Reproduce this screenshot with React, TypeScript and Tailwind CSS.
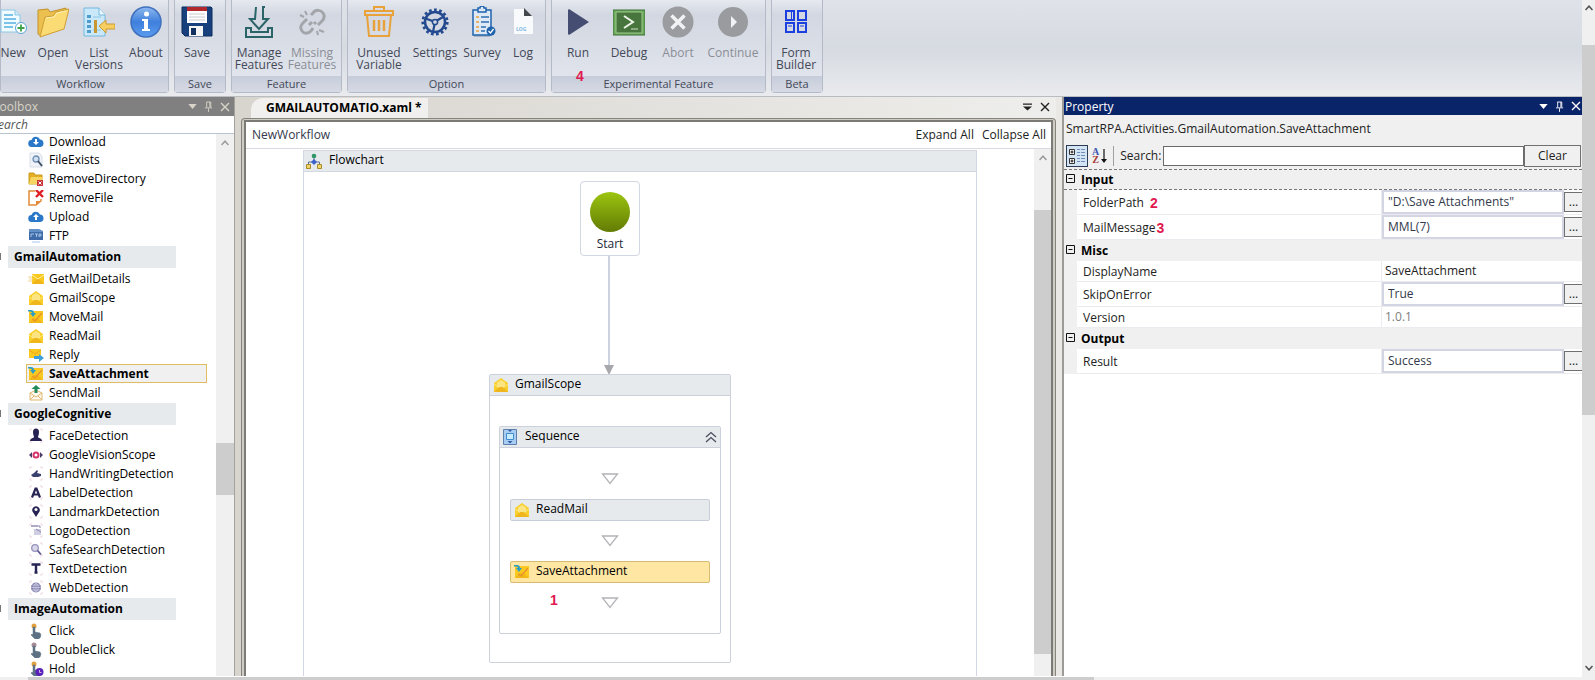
import { ReactNode, useState } from 'react'

// ---------- small shared glyphs ----------

function CaretDown({ className = '' }: { className?: string }) {
  return (
    <svg viewBox="0 0 10 6" className={`h-[5px] w-[9px] ${className}`} aria-hidden="true">
      <path d="M0 0h10L5 6z" fill="currentColor" />
    </svg>
  )
}

function Pin() {
  return (
    <svg viewBox="0 0 10 12" className="h-[11px] w-[9px]" fill="none" stroke="currentColor" aria-hidden="true">
      <path d="M2.500 1h5M3 1v6M6.500 1v6M7.500 1v6M1 7.500h8M5 8v4" />
    </svg>
  )
}

function Cross() {
  return (
    <svg viewBox="0 0 10 10" className="h-[10px] w-[10px]" fill="none" stroke="currentColor" strokeWidth="1.4" aria-hidden="true">
      <path d="M1 1l8 8M9 1L1 9" />
    </svg>
  )
}

function ChevronUp({ className = '' }: { className?: string }) {
  return (
    <svg viewBox="0 0 8 6" className={`h-[6px] w-[8px] ${className}`} fill="none" stroke="currentColor" strokeWidth="1.5" aria-hidden="true">
      <path d="M.5 5L4 1.200l3.500 3.800" />
    </svg>
  )
}

// ---------- ribbon icons ----------

const ribbonIcons: Record<string, ReactNode> = {
  New: (
    <>
      <path d="M4 4h14l5 5v17H4z" fill="#f2fbff" stroke="#8cc8e6" />
      <path d="M18 4v5h5" fill="#cdeaf8" stroke="#8cc8e6" />
      <path d="M7 9h9M7 13h12M7 17h12M7 21h9" stroke="#7cc3ea" strokeWidth="2" />
      <circle cx="24" cy="22" r="5.500" fill="#fff" stroke="#5aa5d8" />
      <path d="M24 18.500v7M20.500 22h7" stroke="#3fa24a" strokeWidth="1.800" />
    </>
  ),
  Open: (
    <>
      <path d="M1 4l10-1 2 3 16-4-1 6-24 22-3-2z" fill="#ecc04e" stroke="#c2922c" />
      <path d="M8 11l8-1 3-4 13-3-5 20L3 31z" fill="#fbdc74" stroke="#cf9d36" />
      <path d="M9 12l8-1 3-4 9-2" stroke="#fff2b5" fill="none" />
    </>
  ),
  'List Versions': (
    <>
      <path d="M1 2h15l6 7v21H1z" fill="#c9e9fa" stroke="#74b8de" />
      <path d="M16 2v7h6" fill="#eaf7ff" stroke="#74b8de" />
      <path d="M4 9h4v3H4zM4 14h4v3H4zM4 19h4v3H4zM4 24h4v3H4z" fill="#4e9ccb" />
      <path d="M10 11h8M10 24h8" stroke="#8cc4e4" />
      <path d="M11 14h3v13h-3z" fill="#c9972f" />
      <path d="M16 20l7-6v4h9v5h-9v4z" fill="#f7cf60" stroke="#cc9a34" />
    </>
  ),
  About: (
    <>
      <defs>
        <linearGradient id="aboutFill" x1="0" y1="0" x2="0" y2="1">
          <stop offset="0" stopColor="#8db9ef" />
          <stop offset=".5" stopColor="#3f7fdd" />
          <stop offset="1" stopColor="#5c9df0" />
        </linearGradient>
      </defs>
      <circle cx="16" cy="16" r="15" fill="url(#aboutFill)" stroke="#3f70bd" strokeWidth="1.500" />
      <circle cx="16.500" cy="8" r="2.500" fill="#fff" />
      <path d="M12 13h6v10h2v2h-8v-2h2v-8h-2z" fill="#fff" />
    </>
  ),
  Save: (
    <>
      <path d="M1 1h29l1 1v28H4l-3-3z" fill="#17407c" stroke="#0d2c5c" />
      <path d="M6 1h20v4H6z" fill="#b3282d" />
      <path d="M6 5h20v12H6z" fill="#fff" />
      <path d="M8 8h16M8 11h16M8 14h16" stroke="#c9c9d2" />
      <path d="M8 20h14v10H8z" fill="#f4f4f4" />
      <path d="M10 22h5v7h-5z" fill="#12305f" />
    </>
  ),
  'Manage Features': (
    <g fill="none" stroke="#2b6468" strokeWidth="2">
      <path d="M13 1l-1 12H7l9 10 9-10h-5V1" />
      <path d="M19 1h3" />
      <path d="M3 22v9h26v-9h-4v4H8v-4z" />
    </g>
  ),
  'Missing Features': (
    <g fill="none" stroke="#a3a5aa" strokeWidth="3">
      <path d="M15 9l2-2c3-4 8-3 10 0s1 6-1 8l-4 4M17 22l-2 3c-3 3-7 3-9 0s-2-5 1-8l4-4M13 19l3-3M20 16l-2 2" />
      <path d="M9 5l2 4M4 9l4 2M28 26l-5-2M22 29l-1-4" strokeWidth="2" />
    </g>
  ),
  'Unused Variable': (
    <g fill="none" stroke="#e9a23b" strokeWidth="2">
      <path d="M2 5h28v4H2zM11 4V1h10v3" />
      <path d="M4 9l2 21h20l2-21" />
      <path d="M11 14v11M16 14v11M21 14v11" strokeWidth="2.500" />
    </g>
  ),
  Settings: (
    <g fill="none" stroke="#23498f">
      <circle cx="16" cy="16" r="12.300" strokeWidth="2.600" strokeDasharray="2.700 2.450" />
      <circle cx="16" cy="16" r="10" strokeWidth="2.500" />
      <circle cx="16" cy="16" r="2.600" strokeWidth="1.500" />
      <path d="M18 14.500l6-3.500M13.500 15l-7-2.500M15.500 18.500L14 26" strokeWidth="2.200" />
    </g>
  ),
  Survey: (
    <g fill="none">
      <path d="M8 30h16" stroke="#7f8da0" strokeWidth="2" opacity=".5" />
      <path d="M7 4h18v25H7z" fill="#dfe9f5" stroke="#1f63ad" strokeWidth="1.500" />
      <path d="M12 2h2a2 2 0 014 0h2v4h-8z" fill="#dfe9f5" stroke="#1f63ad" strokeWidth="1.500" />
      <path d="M15 11h8M15 16h8M15 21h5M15 25h4" stroke="#2f6fb4" strokeWidth="1.500" />
      <path d="M10 11h3M10 16h3M10 21h3M10 25h3" stroke="#e9a23b" strokeWidth="1.500" />
      <circle cx="25" cy="25" r="4.500" fill="#1f63ad" />
      <path d="M22.500 25l2 2 3-4" stroke="#fff" strokeWidth="1.300" />
    </g>
  ),
  Log: (
    <>
      <path d="M7 3h11l8 8v17H7z" fill="#f9fafb" />
      <path d="M17 2l8 8h-8z" fill="#44474d" />
      <text x="9" y="25" fontSize="5" fontWeight="bold" fill="#7fb9e6">LOG</text>
    </>
  ),
  Run: <path d="M6 4l1-1 20 13L7 29l-1-1z" fill="#454d72" />,
  Debug: (
    <>
      <path d="M0 4h32v25H0z" fill="#6aa85a" stroke="#3f7138" />
      <path d="M3 6h26v21H3z" fill="#47753d" stroke="#9cca8c" />
      <path d="M11 10l9 6-9 6" fill="none" stroke="#eef6ea" strokeWidth="2" />
      <path d="M18 23h7" stroke="#cfe3c7" />
    </>
  ),
  Abort: (
    <>
      <circle cx="16" cy="16" r="15.500" fill="#9a9c9f" />
      <path d="M9.500 9.500l13 13M22.500 9.500l-13 13" stroke="#f1f2f4" strokeWidth="3.500" />
    </>
  ),
  Continue: (
    <>
      <circle cx="16" cy="16" r="15" fill="#999b9f" />
      <path d="M14 10l6 6-6 6z" fill="#f1f2f4" />
    </>
  ),
  'Form Builder': (
    <g fill="none" stroke="#1c3fe0" strokeWidth="2">
      <path d="M6 5h8v9H6zM18 5h8v9h-8zM6 17h8v9H6zM18 17h8v9h-8z" />
      <path d="M11.500 6v7M8 20h4M20 20h4" strokeWidth="1" />
    </g>
  ),
}

type RibbonItem = { name: string; width: string; disabled?: boolean }

const ribbonGroups: { label: string; className: string; items: RibbonItem[] }[] = [
  {
    label: 'Workflow',
    className: 'w-[169px]',
    items: [
      { name: 'New', width: '-ml-[7px] w-[38px]' },
      { name: 'Open', width: 'w-[42px]' },
      { name: 'List Versions', width: 'w-[50px]' },
      { name: 'About', width: 'w-[44px]' },
    ],
  },
  { label: 'Save', className: 'w-[52px]', items: [{ name: 'Save', width: 'w-[44px]' }] },
  {
    label: 'Feature',
    className: 'w-[111px]',
    items: [
      { name: 'Manage Features', width: 'w-[54px]' },
      { name: 'Missing Features', width: 'w-[52px]', disabled: true },
    ],
  },
  {
    label: 'Option',
    className: 'w-[199px]',
    items: [
      { name: 'Unused Variable', width: 'w-[62px]' },
      { name: 'Settings', width: 'w-[50px]' },
      { name: 'Survey', width: 'w-[44px]' },
      { name: 'Log', width: 'w-[38px]' },
    ],
  },
  {
    label: 'Experimental Feature',
    className: 'w-[215px]',
    items: [
      { name: 'Run', width: 'w-[52px]' },
      { name: 'Debug', width: 'w-[50px]' },
      { name: 'Abort', width: 'w-[48px]', disabled: true },
      { name: 'Continue', width: 'w-[62px]', disabled: true },
    ],
  },
  { label: 'Beta', className: 'w-[52px]', items: [{ name: 'Form Builder', width: 'w-[48px]' }] },
]

function Marker({ children, className = '' }: { children: ReactNode; className?: string }) {
  return (
    <span className={`font-['Liberation_Sans',sans-serif] text-[14px] leading-4 font-bold text-[#e0194f] ${className}`}>
      {children}
    </span>
  )
}

function Ribbon() {
  return (
    <header className="flex h-[97px] shrink-0 gap-[5px] overflow-hidden border-b border-[#b9bcc0] bg-linear-to-b from-[#dfe2e9] via-[#d6dae1] to-[#e9ebee]">
      {ribbonGroups.map(group => (
        <section
          key={group.label}
          className={`relative flex h-[93px] shrink-0 flex-col rounded-b-sm border-r border-b border-l border-[#b4bac7] bg-linear-to-b from-[#e6e9ef] from-0% via-[#d2d7e1] via-16% to-[#e4e7ee] ${group.className}`}
        >
          <div className="flex flex-1">
            {group.items.map(item => (
              <button
                key={item.name}
                disabled={item.disabled}
                className={`flex shrink-0 flex-col items-center pt-[6px] ${item.width} ${
                  item.disabled ? 'text-[#8b8e96]' : 'text-[#434857]'
                }`}
              >
                <svg viewBox="0 0 32 32" className="h-8 w-8 shrink-0" aria-hidden="true">
                  {ribbonIcons[item.name]}
                </svg>
                <span className="mt-[9px] text-center leading-3">{item.name}</span>
              </button>
            ))}
          </div>
          <div
            className={`flex h-4 items-center justify-center bg-linear-to-b from-[#c6ccda] to-[#d6dae4] text-[11px] whitespace-nowrap text-[#434857] ${
              group.label === 'Workflow' ? 'pr-2' : ''
            }`}
          >
            {group.label}
          </div>
          {group.label === 'Experimental Feature' && <Marker className="absolute top-[68px] left-[24px]">4</Marker>}
        </section>
      ))}
    </header>
  )
}

// ---------- toolbox icons (16 x 16) ----------

const cloud = 'M4 13a3.500 3.500 0 01-.5-7A4.500 4.500 0 0112 5.500a3.800 3.800 0 01.5 7.500z'

const corners = <path d="M2 1h2M2 1v2M14 1h-2M14 1v2M2 14h2M2 14v-2M14 14h-2M14 14v-2" stroke="#ecd6de" fill="none" />

const openMail = (
  <>
    <path d="M1 6l7-5 7 5v9H1z" fill="#f8cf2c" />
    <path d="M4 5.500L8 3l4 2.500V9l-4 2.500L4 9z" fill="#fbe583" />
    <path d="M1 15l5-5h4l5 5z" fill="#efb71c" />
    <path d="M1 7l5 3.500M15 7l-5 3.500" stroke="#fde98a" fill="none" />
  </>
)

const moveMail = (
  <>
    <path d="M1 2h14v12H1z" fill="#f9c922" />
    <path d="M1 14l5-5h4l5 5z" fill="#f3b816" />
    <path d="M4 10l3 2 7-8" stroke="#e88f2c" strokeWidth="1.200" fill="none" />
    <path d="M0 1h3a3 3 0 013 3h2L5 8 2 4h2c0-1-1-1.500-4-1.500z" fill="#2e9fc4" />
  </>
)

const hand = <path d="M5 4h2v5l5 1 1 2-1 3-2 1H7L3 12l1-1 1 1z" fill="#5c7184" stroke="#5c7184" strokeWidth=".5" />

const activityIcons: Record<string, ReactNode> = {
  Download: (
    <>
      <path d={cloud} fill="#2b78c9" />
      <path d="M7 5h2v3h2l-3 3-3-3h2z" fill="#fff" />
    </>
  ),
  FileExists: (
    <>
      <path d="M2 1h9l3 3v11H2z" fill="#f0f3f8" stroke="#d7dde7" />
      <circle cx="8" cy="7" r="3" fill="#cfe0f2" stroke="#6d8db3" strokeWidth="1.300" />
      <path d="M10 9l4 5" stroke="#3d4f66" strokeWidth="2" />
    </>
  ),
  RemoveDirectory: (
    <>
      <path d="M1 2h5l1 2h7v9H1z" fill="#e3ae22" stroke="#c99b22" />
      <path d="M3 6h12l-1 7H1z" fill="#f6d560" />
      <path d="M9 9h6v6H9z" fill="#c9343a" />
      <path d="M10.500 10.500l3 3M13.500 10.500l-3 3" stroke="#fff" />
    </>
  ),
  RemoveFile: (
    <>
      <path d="M7 1H1v14h7l5-4V9" fill="none" stroke="#e38a3a" strokeWidth="1.500" />
      <path d="M8 15v-4h5z" fill="#e38a3a" />
      <path d="M8 0l7 7M15 0L8 7" stroke="#df1f26" strokeWidth="2.400" />
    </>
  ),
  Upload: (
    <>
      <path d={cloud} fill="#2b78c9" />
      <path d="M7 11h2V8h2L8 5 5 8h2z" fill="#fff" />
    </>
  ),
  FTP: (
    <>
      <path d="M1 1h10l4 2v9H1z" fill="#6390c6" />
      <path d="M1 4h14v8H1z" fill="#3f6ca8" />
      <path d="M3 6h3M3 6v3M7 6h3M8.500 6v3M11 9V6h2v2h-2M4 14h8" stroke="#a8c6ea" fill="none" />
    </>
  ),
  GetMailDetails: (
    <>
      <path d="M4 3h12v10H4z" fill="#f9c922" />
      <path d="M4 13l5-5h2l5 5z" fill="#f0b41a" />
      <path d="M4 4l6 4 6-4" stroke="#fff0a0" fill="none" />
      <path d="M0 6h4M1 8h4M0 10h4" stroke="#f0d48a" />
    </>
  ),
  GmailScope: openMail,
  MoveMail: moveMail,
  ReadMail: openMail,
  Reply: (
    <>
      <path d="M1 2h12v9H1z" fill="#f9c922" />
      <path d="M1 3l6 4 6-4" stroke="#e9a91c" fill="none" />
      <path d="M6 9h5V7l5 4-5 4v-3H6z" fill="#3ba0dc" />
    </>
  ),
  SaveAttachment: moveMail,
  SendMail: (
    <>
      <path d="M2 8l6-3 6 3v7H2z" fill="#fdf9ee" stroke="#e0b873" />
      <path d="M2 8l6 4 6-4M2 15l4-4M14 15l-4-4" stroke="#e0b873" fill="none" />
      <path d="M6.500 8V4h-3L8 0l4.500 4h-3v4z" fill="#238a5a" />
    </>
  ),
  FaceDetection: (
    <>
      {corners}
      <path d="M5 4a3 3.500 0 016 0c0 3-1 4-1 5s4 1 4 4H2c0-3 4-3 4-4S5 7 5 4z" fill="#272453" />
    </>
  ),
  GoogleVisionScope: (
    <>
      <path d="M4 5L1 8l3 3zM12 5l3 3-3 3z" fill="#4a3d68" />
      <circle cx="8" cy="8" r="2.500" fill="#fff" stroke="#d6336c" strokeWidth="2" />
    </>
  ),
  HandWritingDetection: (
    <>
      {corners}
      <path d="M3 9l3-2 3-3 1 1-1 2 4 1v2l-3 1H5z" fill="#3b3f6e" />
    </>
  ),
  LabelDetection: (
    <>
      {corners}
      <path d="M4 12.500l3.500-9h1l3.500 9M5.500 9.500h5" stroke="#272453" strokeWidth="2.200" fill="none" />
    </>
  ),
  LandmarkDetection: (
    <>
      {corners}
      <path d="M8 13L4.500 7.500a3.800 3.800 0 117 0z" fill="#272453" />
      <circle cx="8" cy="5.500" r="1.500" fill="#fff" />
    </>
  ),
  LogoDetection: (
    <>
      {corners}
      <path d="M3 2h7v2H3zM6 6h7v6H6z" fill="#cfcde2" />
      <path d="M3 3h9v2M8 6l5 3" stroke="#8d8ab0" fill="none" />
    </>
  ),
  SafeSearchDetection: (
    <>
      {corners}
      <circle cx="7" cy="6" r="3.300" fill="#d8d8ea" stroke="#9694bb" strokeWidth="1.300" />
      <path d="M9.500 8.500L13 12.500" stroke="#5b5891" strokeWidth="1.800" />
    </>
  ),
  TextDetection: (
    <>
      {corners}
      <path d="M3.500 3.500h9M8 3v9M6.500 11.500h3" stroke="#272453" strokeWidth="2.400" fill="none" />
    </>
  ),
  WebDetection: (
    <>
      {corners}
      <circle cx="8" cy="7.500" r="5" fill="#7c7aa9" />
      <path d="M3 7.500h10M8 2.500v10M4 5h8M4 10h8M8 2.500c-3 3-3 7 0 10M8 2.500c3 3 3 7 0 10" stroke="#d9d8ec" strokeWidth=".7" fill="none" />
    </>
  ),
  Click: (
    <>
      <circle cx="6" cy="3" r="2.500" fill="#e0a13e" />
      {hand}
    </>
  ),
  DoubleClick: (
    <>
      <circle cx="6" cy="3" r="2.500" fill="#a58a97" />
      {hand}
    </>
  ),
  Hold: (
    <>
      <circle cx="6" cy="3" r="2.500" fill="#e0a13e" />
      {hand}
      <circle cx="11.500" cy="11" r="4" fill="#5a22b8" />
      <path d="M11.500 9v2.500h2" stroke="#c9b4f0" fill="none" />
    </>
  ),
}

function ActivityIcon({ name }: { name: string }) {
  return (
    <svg viewBox="0 0 16 16" className="h-4 w-4 shrink-0" aria-hidden="true">
      {activityIcons[name]}
    </svg>
  )
}

const toolboxGroups = [
  { title: '', items: ['Download', 'FileExists', 'RemoveDirectory', 'RemoveFile', 'Upload', 'FTP'] },
  {
    title: 'GmailAutomation',
    items: ['GetMailDetails', 'GmailScope', 'MoveMail', 'ReadMail', 'Reply', 'SaveAttachment', 'SendMail'],
  },
  {
    title: 'GoogleCognitive',
    items: [
      'FaceDetection',
      'GoogleVisionScope',
      'HandWritingDetection',
      'LabelDetection',
      'LandmarkDetection',
      'LogoDetection',
      'SafeSearchDetection',
      'TextDetection',
      'WebDetection',
    ],
  },
  { title: 'ImageAutomation', items: ['Click', 'DoubleClick', 'Hold'] },
]

function Toolbox() {
  const [selected, setSelected] = useState('SaveAttachment')

  return (
    <aside className="flex w-[235px] shrink-0 flex-col overflow-hidden border-r border-[#a5a29c] bg-white">
      <div className="flex h-[19px] shrink-0 items-center gap-[7px] bg-[#808080] pr-1 text-[#d8d4c8]">
        <h2 className="-ml-[7px] flex-1">Toolbox</h2>
        <CaretDown />
        <Pin />
        <Cross />
      </div>
      <input
        aria-label="Search activities"
        placeholder="Search"
        className="-ml-2 h-[18px] shrink-0 border-b border-[#b9c4d0] bg-white italic outline-none placeholder:text-[#555]"
      />
      <div className="flex min-h-0 flex-1">
        <div className="min-w-0 flex-1 overflow-hidden">
          {toolboxGroups.map(group => (
            <div key={group.title}>
              {group.title && (
                <div className="mb-px flex h-[23px] items-center">
                  <span className="h-[7px] w-px bg-[#777]" />
                  <h3 className="ml-[7px] flex h-[22px] w-[168px] items-center bg-[#e6eaed] pl-[6px] font-bold text-black">
                    {group.title}
                  </h3>
                </div>
              )}
              <ul>
                {group.items.map(name => (
                  <li key={name}>
                    <button
                      onClick={() => setSelected(name)}
                      className={`ml-[26px] flex w-[181px] items-center gap-[5px] border pl-px text-black ${
                        name === 'Download' ? 'h-4' : 'h-[19px]'
                      } ${selected === name ? 'border-[#e0bd62] bg-[#f0f0f0] font-bold' : 'border-transparent'}`}
                    >
                      <ActivityIcon name={name} />
                      {name}
                    </button>
                  </li>
                ))}
              </ul>
            </div>
          ))}
        </div>
        <div className="flex w-[18px] shrink-0 flex-col items-center bg-[#f0f0f0]">
          <ChevronUp className="mt-[6px] text-[#9a9a9a]" />
          <div className="mt-[297px] h-[52px] w-full bg-[#cdcdcd]" />
        </div>
      </div>
    </aside>
  )
}

// ---------- designer ----------

function DropPoint() {
  return (
    <svg viewBox="0 0 18 12" className="h-3 w-[18px] shrink-0" aria-hidden="true">
      <path d="M1.500 1h15L9 10.500z" fill="#fff" stroke="#b3b3b8" strokeWidth="1.300" />
    </svg>
  )
}

function ActivityCard({ name, active }: { name: string; active?: boolean }) {
  return (
    <div
      className={`flex h-[22px] w-full items-center gap-[6px] rounded-xs border pl-[3px] text-black ${
        active ? 'border-[#d8bb72] bg-[#ffe6a3]' : 'border-[#c9cdd8] bg-[#e6eaed]'
      }`}
    >
      <ActivityIcon name={name} />
      <span className="pb-[2px]">{name}</span>
    </div>
  )
}

function Designer() {
  return (
    <main className="flex min-w-0 flex-1 flex-col bg-linear-to-r from-[#d8d4ce] to-[#eeeeec] pl-[6px]">
      <div className="flex h-[21px] shrink-0 items-end justify-between pr-[6px]">
        <button className="ml-[10px] h-[20px] rounded-tl-xl bg-[#f1f0ee] pr-[6px] pb-px pl-[15px] font-bold text-black">
          GMAILAUTOMATIO.xaml *
        </button>
        <div className="flex h-full items-center gap-2 pb-px text-[#222]">
          <svg viewBox="0 0 10 8" className="h-2 w-[9px]" aria-hidden="true">
            <path d="M0 0h10v1.500H0zM0 3.500h10L5 8z" fill="currentColor" />
          </svg>
          <Cross />
        </div>
      </div>
      <div className="flex min-h-0 flex-1 rounded-t border-x border-t border-[#85857e] bg-[#cfccc5] px-[2px] pt-px">
        <div className="flex min-w-0 flex-1 flex-col border-x-2 border-t-2 border-[#7c7b75] bg-white">
          <div className="flex h-[27px] shrink-0 items-center justify-between border-b border-[#d8dae0] pr-[5px] pl-[6px]">
            <span className="text-[#33394b]">NewWorkflow</span>
            <div className="flex gap-2 text-[#222]">
              <button>Expand All</button>
              <button>Collapse All</button>
            </div>
          </div>
          <div className="flex min-h-0 flex-1">
            <div className="min-w-0 flex-1 overflow-hidden px-[57px] pt-px">
              <div className="relative h-full border-x border-t border-[#d3d7e2] bg-white">
                <div className="flex h-[21px] items-center gap-[7px] border-b border-[#d3d7e2] bg-[#e6eaed] pl-[2px] text-black">
                  <svg viewBox="0 0 16 16" className="h-4 w-4" aria-hidden="true">
                    <path d="M8 4v4M2.500 12V9h11v3" stroke="#5a6f96" fill="none" />
                    <circle cx="8" cy="3" r="2.300" fill="#2f9668" />
                    <path d="M8 6l3 3-3 3-3-3z" fill="#3d63c9" />
                    <path d="M.5 11.500h4v4h-4zM11.500 11.500h4v4h-4z" fill="#f2d665" stroke="#a88b2d" />
                  </svg>
                  <span className="pb-[2px]">Flowchart</span>
                </div>

                <div className="absolute top-[30px] left-[276px] flex h-[75px] w-[60px] flex-col items-center rounded border border-[#d3d7e2] bg-white pt-[10px] text-[#22283a]">
                  <div className="h-10 w-10 rounded-full bg-linear-to-b from-[#9cc510] to-[#637c05]" />
                  <span className="mt-1">Start</span>
                </div>

                <svg className="absolute top-[105px] left-[300px] h-[119px] w-[10px]" viewBox="0 0 10 119" aria-hidden="true">
                  <path d="M5 0v110" stroke="#cdd3de" strokeWidth="2" />
                  <path d="M0 109h10l-5 10z" fill="#a6a8ac" />
                </svg>

                <div className="absolute top-[223px] left-[185px] w-[242px] rounded-xs border border-[#cdd1dc] bg-white pb-[28px]">
                  <div className="flex h-[21px] items-center gap-[6px] border-b border-[#cdd1dc] bg-[#e6eaed] pl-[3px] text-black">
                    <ActivityIcon name="GmailScope" />
                    <span className="pb-[2px]">GmailScope</span>
                  </div>
                  <div className="mx-[9px] mt-[30px] rounded-xs border border-[#cdd1dc] bg-white">
                    <div className="flex h-[21px] items-center gap-[7px] border-b border-[#cdd1dc] bg-[#e6eaed] pr-[3px] pl-[2px] text-black">
                      <svg viewBox="0 0 16 16" className="h-4 w-4" aria-hidden="true">
                        <path d="M1.500.5h13v15h-13z" fill="#a9cdf2" stroke="#5d80ad" />
                        <path d="M4.500 4.500h7v6h-7z" fill="#c8ecfb" stroke="#3f8ccf" />
                        <path d="M6 1h4L8 3zM5.500 12h5L8 14.500z" fill="#2d5ca8" />
                      </svg>
                      <span className="flex-1 pb-[2px]">Sequence</span>
                      <button aria-label="Collapse Sequence">
                        <svg viewBox="0 0 12 12" className="h-3 w-3" fill="none" stroke="#4a4e5e" strokeWidth="1.300" aria-hidden="true">
                          <path d="M1 6l5-4.500L11 6M1 11l5-4.500 5 4.500" />
                        </svg>
                      </button>
                    </div>
                    <div className="relative flex flex-col items-center gap-[14px] px-[10px] pt-[25px] pb-6">
                      <DropPoint />
                      <ActivityCard name="ReadMail" />
                      <DropPoint />
                      <ActivityCard name="SaveAttachment" active />
                      <DropPoint />
                      <Marker className="absolute bottom-[25px] left-[50px]">1</Marker>
                    </div>
                  </div>
                </div>
              </div>
            </div>
            <div className="flex w-[17px] shrink-0 flex-col items-center bg-[#f0f0f0]">
              <ChevronUp className="mt-[6px] text-[#9a9a9a]" />
              <div className="mt-[49px] h-[444px] w-full bg-[#cdcdcd]" />
            </div>
          </div>
        </div>
      </div>
    </main>
  )
}

// ---------- property grid ----------

type Field = { name: string; value: string; kind: 'expression' | 'plain' | 'readonly'; marker?: string }

const propertySections: { title: string; fields: Field[] }[] = [
  {
    title: 'Input',
    fields: [
      { name: 'FolderPath', value: '"D:\\Save Attachments"', kind: 'expression', marker: '2' },
      { name: 'MailMessage', value: 'MML(7)', kind: 'expression', marker: '3' },
    ],
  },
  {
    title: 'Misc',
    fields: [
      { name: 'DisplayName', value: 'SaveAttachment', kind: 'plain' },
      { name: 'SkipOnError', value: 'True', kind: 'expression' },
      { name: 'Version', value: '1.0.1', kind: 'readonly' },
    ],
  },
  { title: 'Output', fields: [{ name: 'Result', value: 'Success', kind: 'expression' }] },
]

function PropertyRow({ field }: { field: Field }) {
  const tall = field.kind === 'expression'
  return (
    <div className={`ml-[13px] grid grid-cols-[1fr_200px] border-b border-[#ececf0] bg-white ${tall ? 'h-[25px]' : 'h-[21px]'}`}>
      <div className="flex items-center border-r border-[#ececf0] pt-px pl-[6px] text-[#222]">
        <label htmlFor={field.name}>{field.name}</label>
        {field.marker && <Marker className={field.marker === '2' ? 'ml-[6px]' : 'ml-px'}>{field.marker}</Marker>}
      </div>
      {tall ? (
        <div className="flex min-w-0 items-stretch">
          <input
            id={field.name}
            defaultValue={field.value}
            className="min-w-0 flex-1 border-2 border-[#d3d6e2] bg-white pl-1 text-[#33394b] outline-none"
          />
          <button
            aria-label={`Edit ${field.name}`}
            className="my-[2px] w-[18px] shrink-0 border-y border-l border-[#707070] bg-[#f0f0f0] text-[#222]"
          >
            ...
          </button>
        </div>
      ) : (
        <input
          id={field.name}
          defaultValue={field.value}
          readOnly={field.kind === 'readonly'}
          className={`min-w-0 bg-white pl-[3px] outline-none ${field.kind === 'readonly' ? 'text-[#808080]' : 'text-[#222]'}`}
        />
      )}
    </div>
  )
}

function PropertyPanel() {
  return (
    <aside className="ml-[6px] flex w-[520px] shrink-0 flex-col border-l-2 border-[#9c9b97] bg-white">
      <div className="flex h-[18px] shrink-0 items-center gap-[7px] bg-[#0a246a] pr-px pl-px text-white">
        <h2 className="flex-1 pt-px">Property</h2>
        <CaretDown />
        <Pin />
        <Cross />
      </div>
      <div className="bg-[#f0f0f0]">
        <p className="flex h-[27px] items-center pl-[2px] text-[#222]">SmartRPA.Activities.GmailAutomation.SaveAttachment</p>
        <div className="flex h-[27px] items-center pr-px pl-[2px]">
          <button aria-label="Categorized" className="h-[22px] w-[22px] shrink-0 border border-[#2c3c54] bg-[#d3e4f5]">
            <svg viewBox="0 0 20 20" className="h-5 w-5" fill="none" aria-hidden="true">
              <path d="M2.500 3.500h5v5h-5zM2.500 12.500h5v5h-5z" fill="#fff" stroke="#333" />
              <path d="M3.500 6h3M5 4.500v3M3.500 15h3M5 13.500v3" stroke="#111" />
              <path d="M10 3.500h3M14 3.500h4M10 6.500h3M14 6.500h4M10 9.500h3M14 9.500h4M10 12.500h3M14 12.500h4M10 15.500h3M14 15.500h4" stroke="#6f8fb8" />
            </svg>
          </button>
          <button aria-label="Alphabetical" className="ml-1 flex shrink-0 items-center">
            <span className="flex flex-col font-['Liberation_Serif',serif] text-[10px] leading-[8px] font-bold">
              <span className="text-[#3a56b0]">A</span>
              <span className="text-[#a83a34]">Z</span>
            </span>
            <svg viewBox="0 0 6 16" className="ml-[2px] h-4 w-[6px]" aria-hidden="true">
              <path d="M3 1v11" stroke="#111" strokeWidth="1.200" />
              <path d="M0 11h6l-3 4z" fill="#111" />
            </svg>
          </button>
          <span className="mx-[6px] h-5 w-px shrink-0 bg-[#a0a0a0]" />
          <label htmlFor="property-search" className="shrink-0 text-[#222]">
            Search:
          </label>
          <input id="property-search" className="ml-[2px] h-5 min-w-0 flex-1 border border-[#6a6a6a] bg-white px-1 outline-none" />
          <button className="h-[22px] w-[57px] shrink-0 border border-[#707070] bg-[#f0f0f0] text-[#222]">Clear</button>
        </div>
      </div>
      <div className="bg-[#f0f0f0]">
        {propertySections.map(section => (
          <section key={section.title}>
            <div
              className={`flex h-[21px] items-center gap-[6px] pl-[2px] ${
                section.title === 'Input' ? 'border-y border-dashed border-[#777]' : ''
              }`}
            >
              <button aria-label={`Collapse ${section.title}`} className="mb-[2px]">
                <svg viewBox="0 0 9 9" className="h-[9px] w-[9px]" fill="none" stroke="#111" aria-hidden="true">
                  <path d="M.5.5h8v8h-8zM2.500 4.500h4" />
                </svg>
              </button>
              <h3 className="font-bold text-black">{section.title}</h3>
            </div>
            {section.fields.map(field => (
              <PropertyRow key={field.name} field={field} />
            ))}
          </section>
        ))}
      </div>
    </aside>
  )
}

export default function App() {
  return (
    <div className="flex h-screen overflow-hidden bg-[#e9e8e4] font-['Open_Sans','Noto_Sans',sans-serif] text-[12px] leading-4">
      <div className="flex min-w-0 flex-1 flex-col">
        <Ribbon />
        <div className="flex min-h-0 flex-1">
          <Toolbox />
          <Designer />
          <PropertyPanel />
        </div>
        <div className="h-[4px] shrink-0 border-t border-white bg-[#f0f0f0]">
          <div className="mr-[488px] ml-7 h-full bg-[#cdcdcd]" />
        </div>
      </div>
      <div className="flex w-[13px] shrink-0 flex-col items-center bg-[#f0f0f0] text-[#505050]">
        <ChevronUp className="mt-[5px] shrink-0" />
        <div className="mt-[34px] h-[370px] w-full shrink-0 bg-[#cdcdcd]" />
        <ChevronUp className="mt-auto mb-[9px] shrink-0 rotate-180" />
      </div>
    </div>
  )
}
